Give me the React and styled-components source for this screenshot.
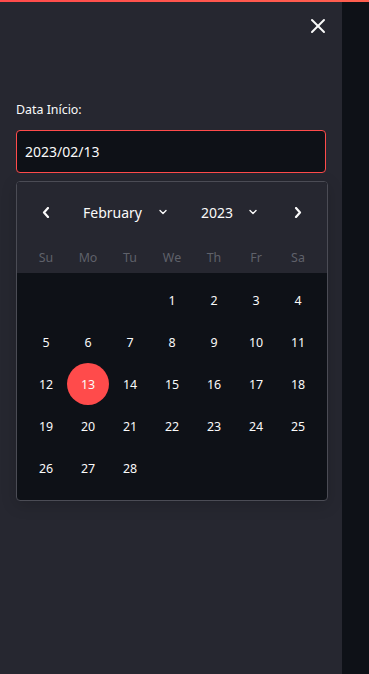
import React from "react";
import styled, { createGlobalStyle } from "styled-components";
import { X } from "lucide-react";

const GlobalStyle = createGlobalStyle`
  html, body {
    margin: 0;
    padding: 0;
    height: 100%;
    background-color: #0e1117;
  }
  #root {
    height: 100%;
  }
  * {
    box-sizing: border-box;
  }
`;

const Page = styled.div`
  display: flex;
  flex-direction: column;
  height: 100vh;
  font-family: "Source Sans Pro", "Noto Sans", sans-serif;
  color: #fafafa;
`;

const TopBar = styled.div`
  height: 2px;
  flex: none;
  background: linear-gradient(90deg, #ff4b4b, #ff5f4f);
`;

const Main = styled.div`
  display: flex;
  flex: 1;
`;

const Sidebar = styled.div`
  width: 342px;
  flex: none;
  background-color: #262730;
  padding: 0 16px;
`;

const Content = styled.div`
  flex: 1;
  background-color: #0e1117;
`;

const CloseRow = styled.div`
  display: flex;
  justify-content: flex-end;
  padding-top: 12px;
  margin-right: -4px;
`;

const CloseButton = styled.button`
  width: 24px;
  height: 24px;
  padding: 0;
  border: none;
  background: none;
  color: #fafafa;
  display: flex;
  align-items: center;
  justify-content: center;
  cursor: pointer;
`;

const Label = styled.label`
  display: block;
  margin-top: 62px;
  font-size: 12.4px;
  line-height: 20px;
  color: #fafafa;
`;

const DateInput = styled.div`
  margin-top: 10px;
  height: 43px;
  width: 310px;
  border: 1px solid #ff4b4b;
  border-radius: 4px;
  background-color: #0e1117;
  display: flex;
  align-items: center;
  padding-left: 8px;
  font-size: 14px;
  color: #fafafa;
`;

const Popover = styled.div`
  margin-top: 8px;
  width: 312px;
  border: 1px solid #4b4c55;
  border-radius: 4px;
  overflow: hidden;
  background-color: #0e1117;
  box-shadow: 0 4px 16px rgba(0, 0, 0, 0.16);
`;

const Header = styled.div`
  background-color: #262730;
  padding: 12px 8px 0;
`;

const NavRow = styled.div`
  display: flex;
  align-items: center;
  height: 36px;
`;

const ArrowButton = styled.button`
  width: 42px;
  height: 36px;
  padding: 0;
  border: none;
  background: none;
  color: #fafafa;
  display: flex;
  align-items: center;
  justify-content: center;
`;

const SelectGroup = styled.div`
  flex: 1;
  display: flex;
  align-items: center;
  padding-left: 16px;
  gap: 34px;
`;

const Select = styled.div`
  display: flex;
  align-items: center;
  gap: ${(p) => p.$gap}px;
  font-size: 14px;
  color: #fafafa;
`;

const Grid = styled.div`
  display: grid;
  grid-template-columns: repeat(7, 42px);
`;

const WeekRow = styled(Grid)`
  margin-top: 11px;
  height: 32px;
  align-items: center;
`;

const WeekDay = styled.div`
  text-align: center;
  font-size: 12.4px;
  color: #5f616a;
`;

const Days = styled(Grid)`
  padding: 6px 8px 11px;
  grid-auto-rows: 42px;
`;

const Day = styled.div`
  display: flex;
  align-items: center;
  justify-content: center;
  font-size: 12.4px;
  color: #fafafa;
  border-radius: 50%;
  background-color: ${(p) => (p.$selected ? "#ff4b4b" : "transparent")};
`;

const Chevron = ({ dir }) => {
  const d = dir === "left" ? "M6 1 L2 5.5 L6 10" : "M2 1 L6 5.5 L2 10";
  return (
    <svg width="8" height="11" viewBox="0 0 8 11" fill="none">
      <path d={d} stroke="#fafafa" strokeWidth="2.2" strokeLinecap="round" strokeLinejoin="round" />
    </svg>
  );
};

const Caret = () => (
  <svg width="8" height="6" viewBox="0 0 8 6" fill="none">
    <path d="M1 1.5 L4 4.5 L7 1.5" stroke="#fafafa" strokeWidth="1.4" strokeLinecap="round" strokeLinejoin="round" />
  </svg>
);

const weekDays = ["Su", "Mo", "Tu", "We", "Th", "Fr", "Sa"];

// Feb 2023 starts on Wednesday
const cells = [null, null, null, ...Array.from({ length: 28 }, (_, i) => i + 1)];

export default function App() {
  return (
    <>
      <GlobalStyle />
      <Page>
        <TopBar />
        <Main>
          <Sidebar>
            <CloseRow>
              <CloseButton aria-label="Close">
                <X size={24} strokeWidth={2} />
              </CloseButton>
            </CloseRow>
            <Label>Data Início:</Label>
            <DateInput>2023/02/13</DateInput>
            <Popover>
              <Header>
                <NavRow>
                  <ArrowButton aria-label="Previous month">
                    <Chevron dir="left" />
                  </ArrowButton>
                  <SelectGroup>
                    <Select $gap={17}>
                      February <Caret />
                    </Select>
                    <Select $gap={16}>
                      2023 <Caret />
                    </Select>
                  </SelectGroup>
                  <ArrowButton aria-label="Next month">
                    <Chevron dir="right" />
                  </ArrowButton>
                </NavRow>
                <WeekRow>
                  {weekDays.map((w) => (
                    <WeekDay key={w}>{w}</WeekDay>
                  ))}
                </WeekRow>
              </Header>
              <Days>
                {cells.map((d, i) => (
                  <Day key={i} $selected={d === 13}>
                    {d}
                  </Day>
                ))}
              </Days>
            </Popover>
          </Sidebar>
          <Content />
        </Main>
      </Page>
    </>
  );
}
